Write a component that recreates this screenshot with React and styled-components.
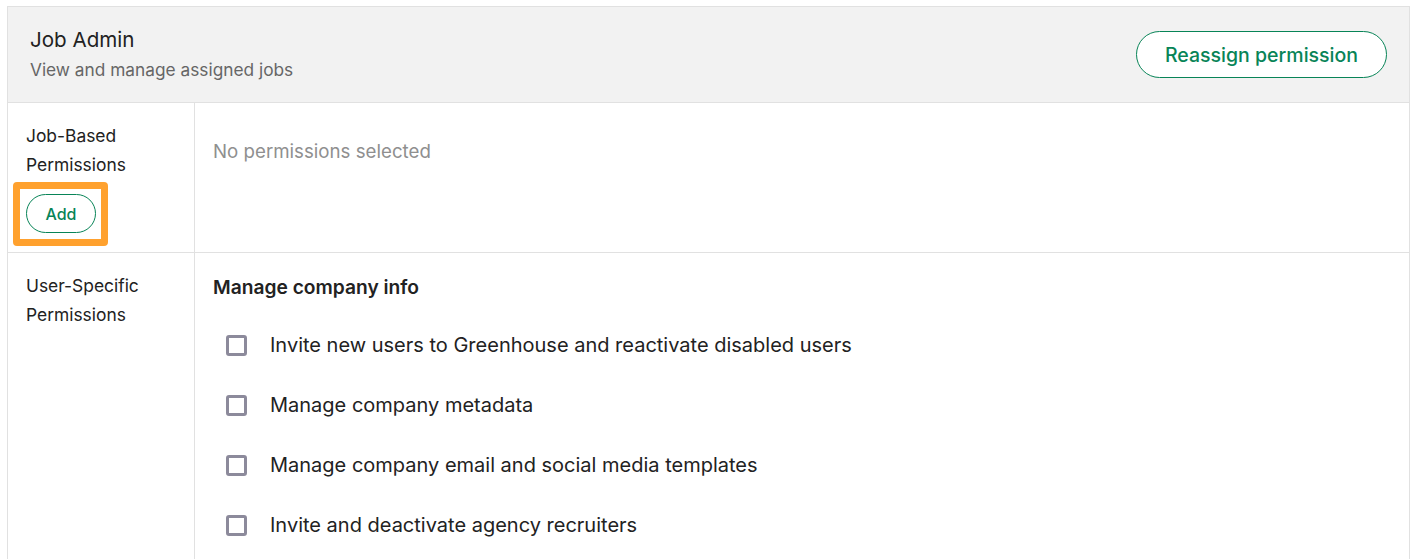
import React from "react";
import styled, { createGlobalStyle } from "styled-components";

const Global = createGlobalStyle`
  html, body { margin: 0; padding: 0; background: #fff; }
  body { font-family: Inter, "Open Sans", "Liberation Sans", sans-serif; color: #222; }
`;

const Page = styled.div`
  padding: 6px 14px 0 7px;
`;

const Panel = styled.div`
  border: 1px solid #e1e1e1;
  border-bottom: none;
  width: 1403px;
  box-sizing: border-box;
`;

const Header = styled.div`
  background: #f2f2f2;
  display: flex;
  align-items: center;
  justify-content: space-between;
  padding: 0 22px 0 22px;
  height: 95px;
  border-bottom: 1px solid #e1e1e1;
`;

const TitleBlock = styled.div`
  display: flex;
  flex-direction: column;
  gap: 6px;
`;

const Title = styled.div`
  font-size: 20.6px;
  color: #222;
  line-height: 26px;
  margin-top: -2px;
`;

const Subtitle = styled.div`
  font-size: 17.3px;
  color: #666;
  line-height: 22px;
`;

const PillButton = styled.button`
  font-family: inherit;
  background: #fff;
  color: #088457;
  border: 1px solid #088457;
  border-radius: 999px;
  font-weight: 500;
  font-size: ${(p) => (p.$small ? "16px" : "19.5px")};
  height: ${(p) => (p.$small ? "39px" : "47px")};
  width: ${(p) => (p.$small ? "70px" : "251px")};
  padding: 0;
  cursor: pointer;
`;

const Row = styled.div`
  display: grid;
  grid-template-columns: 187px 1fr;
  border-bottom: ${(p) => (p.$last ? "none" : "1px solid #e1e1e1")};
  min-height: ${(p) => p.$h || "auto"};
`;

const LabelCell = styled.div`
  border-right: 1px solid #e1e1e1;
  padding: 18px 0 0 18px;
  font-size: 17.4px;
  line-height: 29px;
  color: #222;
`;

const ContentCell = styled.div`
  padding: 22px 18px;
`;

const Highlight = styled.div`
  display: inline-flex;
  margin: 3px 0 0 -13px;
  border: 7px solid #ffa12e;
  border-radius: 4px;
  padding: 5px 5px 6px 6px;
`;

const Muted = styled.div`
  font-size: 18.7px;
  color: #8f8f8f;
  line-height: 24px;
  margin-top: 15px;
`;

const SectionTitle = styled.div`
  font-size: 19.2px;
  font-weight: 600;
  color: #222;
  line-height: 24px;
  margin-bottom: 34px;
`;

const List = styled.div`
  display: flex;
  flex-direction: column;
  gap: 36px;
  padding-left: 13px;
`;

const Item = styled.label`
  display: flex;
  align-items: center;
  gap: 23px;
  font-size: 20px;
  line-height: 24px;
  color: #222;
`;

const Box = styled.span`
  width: 21px;
  height: 21px;
  box-sizing: border-box;
  border: 3px solid #8c8a9b;
  border-radius: 3px;
  flex-shrink: 0;
`;

const items = [
  "Invite new users to Greenhouse and reactivate disabled users",
  "Manage company metadata",
  "Manage company email and social media templates",
  "Invite and deactivate agency recruiters",
];

export default function App() {
  return (
    <>
      <Global />
      <Page>
        <Panel>
          <Header>
            <TitleBlock>
              <Title>Job Admin</Title>
              <Subtitle>View and manage assigned jobs</Subtitle>
            </TitleBlock>
            <PillButton>Reassign permission</PillButton>
          </Header>
          <Row $h="149px">
            <LabelCell>
              <div>Job-Based</div>
              <div>Permissions</div>
              <Highlight>
                <PillButton $small>Add</PillButton>
              </Highlight>
            </LabelCell>
            <ContentCell>
              <Muted>No permissions selected</Muted>
            </ContentCell>
          </Row>
          <Row $last>
            <LabelCell>
              <div>User-Specific</div>
              <div>Permissions</div>
            </LabelCell>
            <ContentCell>
              <SectionTitle>Manage company info</SectionTitle>
              <List>
                {items.map((t) => (
                  <Item key={t}>
                    <Box />
                    {t}
                  </Item>
                ))}
              </List>
            </ContentCell>
          </Row>
        </Panel>
      </Page>
    </>
  );
}
